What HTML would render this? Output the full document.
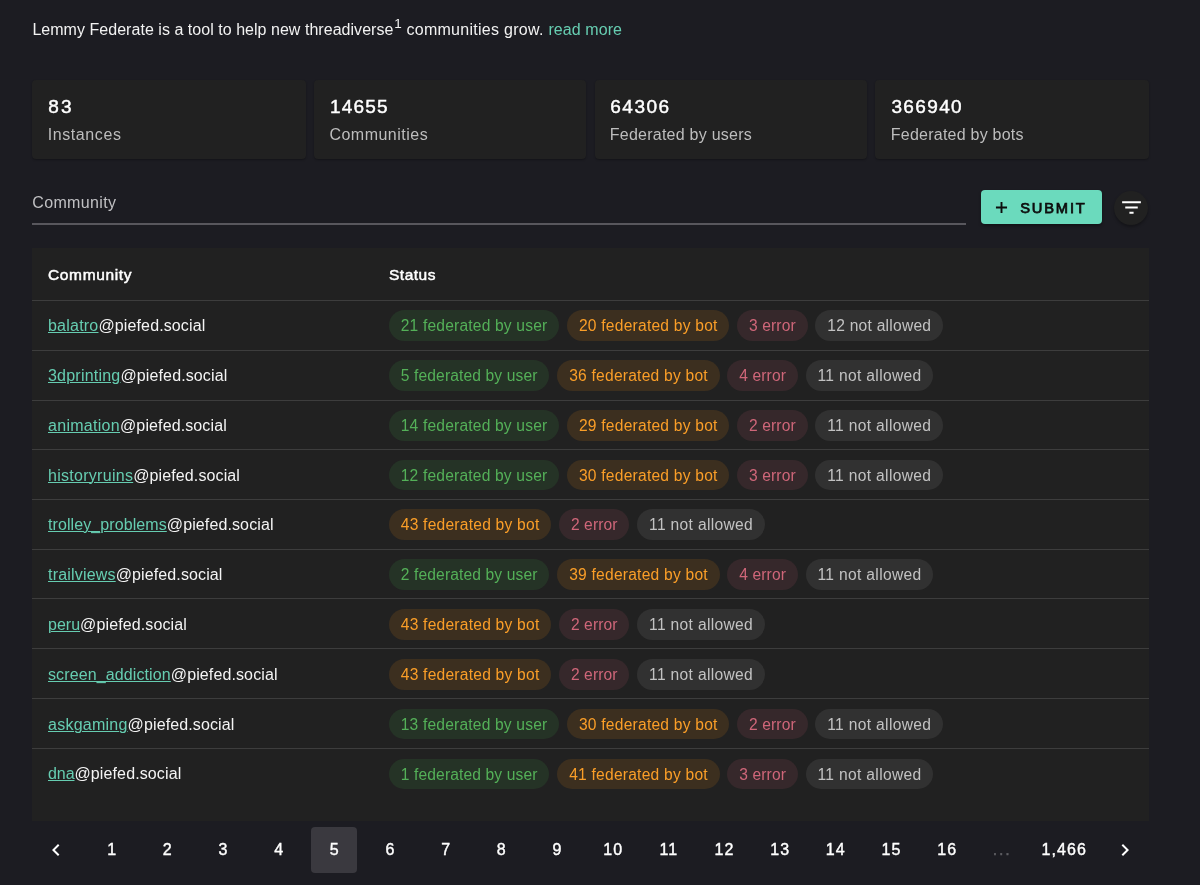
<!DOCTYPE html>
<html lang="en">
<head>
<meta charset="utf-8">
<title>Lemmy Federate</title>
<style>
*{box-sizing:border-box;margin:0;padding:0}
html,body{width:1200px;height:885px;overflow:hidden;background:#1c1c22;color:#fff;font-family:"Liberation Sans",Arial,sans-serif;}
body{position:relative}
.abs{position:absolute}
#root{position:absolute;left:0;top:0;width:1200px;height:885px;will-change:transform;background:#1c1c22}
a{color:#66cdb1;text-decoration:underline;text-decoration-thickness:1px;text-underline-offset:1.2px}
.intro{left:32.4px;top:17.5px;font-size:16px;line-height:24px;white-space:nowrap;color:#f2f2f2;letter-spacing:0}
.intro a{text-decoration:none;color:#66cdb1}
.intro sup{font-size:13.5px;position:relative;top:-7px;vertical-align:baseline;line-height:0;margin:0 0 0 .8px}
.card{top:80px;width:274px;height:79px;background:#212121;border-radius:4px;box-shadow:0 1px 2px rgba(0,0,0,.3)}
.card .n{position:absolute;left:17px;top:14.5px;font-size:19px;-webkit-text-stroke:.45px;line-height:24px;white-space:nowrap}
.card .l{position:absolute;left:16.6px;top:43px;white-space:nowrap;font-size:16px;line-height:24px;color:#bdbdbd;letter-spacing:.2px}
.field-label{left:32.3px;top:191.3px;font-size:16px;line-height:24px;color:#c0c0c3;letter-spacing:.34px}
.field-line{left:32px;top:223px;width:934px;height:1.5px;background:#58575d}
.btn{left:981px;top:190.4px;width:121px;height:34px;border-radius:4px;background:#6bdabd;color:#0d0d0d;box-shadow:0 2px 3px rgba(0,0,0,.35)}
.btn span{position:absolute;left:39.2px;top:.5px;line-height:34.5px;font-size:14.7px;-webkit-text-stroke:.75px}
.fab{left:1114px;top:191px;width:34px;height:34px;border-radius:50%;background:#212121;box-shadow:0 2px 3px rgba(0,0,0,.3)}
.table{left:32px;top:248px;width:1117px;height:572.6px;background:#212121}
.th{position:absolute;top:14.5px;font-size:15.5px;-webkit-text-stroke:.5px;line-height:24px;color:#fff;white-space:nowrap}
.row{position:absolute;left:0;width:100%;height:49.7px}
.ln{position:absolute;left:0;width:100%;height:1px;background:#3d3d3d}
.row .c{position:absolute;left:16px;top:13.8px;line-height:24px;font-size:16px;white-space:nowrap;color:#f4f4f4;letter-spacing:.17px}
.chips{position:absolute;left:356.75px;top:9.85px;height:30.7px;white-space:nowrap;font-size:0}
.chip{display:inline-block;height:30.7px;line-height:31.8px;overflow:hidden;border-radius:15.4px;padding:0 12px;font-size:15.6px;margin-right:7.7px;vertical-align:top}
.g{background:#253326;color:#54b058}
.o{background:#3c2f1f;color:#fa9e28}
.e{background:#36282b;color:#cf6679}
.n2{background:#313131;color:#c2c2c2}
.pg{top:826.6px;width:46px;height:46.2px;border-radius:4px;text-align:center;line-height:46.2px;font-size:16px;-webkit-text-stroke:.4px;letter-spacing:1.1px;text-indent:1.1px;color:#fff}
.pg.sel{background:#3a393f}
</style>
</head>
<body>
<div id="root">
<div class="abs intro"><span style="letter-spacing:.035px">Lemmy Federate is a tool to help new threadiverse</span><sup>1</sup><span style="letter-spacing:.28px"> communities grow. </span><a style="letter-spacing:.08px">read more</a></div>

<div class="abs card" style="left:32px;width:274px"><div class="n" style="left:16.25px;letter-spacing:2.259px">83</div><div class="l" style="left:15.65px;letter-spacing:0.602px">Instances</div></div>
<div class="abs card" style="left:314px;width:272px"><div class="n" style="left:16.00px;letter-spacing:1.214px">14655</div><div class="l" style="left:15.40px;letter-spacing:0.494px">Communities</div></div>
<div class="abs card" style="left:595px;width:272px"><div class="n" style="left:15.35px;letter-spacing:1.464px">64306</div><div class="l" style="left:14.75px;letter-spacing:0.247px">Federated by users</div></div>
<div class="abs card" style="left:875px;width:274px"><div class="n" style="left:16.40px;letter-spacing:1.379px">366940</div><div class="l" style="left:15.80px;letter-spacing:0.233px">Federated by bots</div></div>

<div class="abs field-label">Community</div>
<div class="abs field-line"></div>
<div class="abs btn"><svg class="abs" style="left:11.1px;top:7.8px" width="19" height="19" viewBox="0 0 24 24"><path d="M19,13.2H13.2V19H10.8V13.2H5V10.8H10.8V5H13.2V10.8H19V13.2Z" fill="#0d0d0d"/></svg><span style="letter-spacing:1.820px">SUBMIT</span></div>
<div class="abs fab"><svg class="abs" style="left:4.7px;top:3.9px" width="25" height="25" viewBox="0 0 24 24"><path d="M6,12.9H18V11.1H6M3,6.1V7.9H21V6.1M10,17.9H14V16.1H10V17.9Z" fill="#fff"/></svg></div>

<div class="abs table">
<div class="th" style="left:16px;letter-spacing:0.639px">Community</div>
<div class="th" style="left:357px;letter-spacing:0.509px">Status</div>
<div class="ln" style="top:52.20px"></div>
<div class="ln" style="top:101.91px"></div>
<div class="ln" style="top:151.62px"></div>
<div class="ln" style="top:201.33px"></div>
<div class="ln" style="top:251.04px"></div>
<div class="ln" style="top:300.75px"></div>
<div class="ln" style="top:350.46px"></div>
<div class="ln" style="top:400.17px"></div>
<div class="ln" style="top:449.88px"></div>
<div class="ln" style="top:499.59px"></div>
<div class="row" style="top:52.40px"><div class="c"><a style="letter-spacing:0.225px">balatro</a><span style="letter-spacing:0.116px">@piefed.social</span></div><div class="chips"><span class="chip g" style="letter-spacing:0.182px;padding-right:11.818px">21 federated by user</span><span class="chip o" style="letter-spacing:0.228px;padding-right:11.772px">20 federated by bot</span><span class="chip e" style="letter-spacing:0.094px;padding-right:11.906px">3 error</span><span class="chip n2" style="letter-spacing:0.240px;padding-right:11.760px">12 not allowed</span></div></div>
<div class="row" style="top:102.21px"><div class="c"><a style="letter-spacing:0.222px">3dprinting</a><span style="letter-spacing:0.116px">@piefed.social</span></div><div class="chips"><span class="chip g" style="letter-spacing:0.132px;padding-right:11.868px">5 federated by user</span><span class="chip o" style="letter-spacing:0.228px;padding-right:11.772px">36 federated by bot</span><span class="chip e" style="letter-spacing:0.094px;padding-right:11.906px">4 error</span><span class="chip n2" style="letter-spacing:0.329px;padding-right:11.671px">11 not allowed</span></div></div>
<div class="row" style="top:152.02px"><div class="c"><a style="letter-spacing:0.292px">animation</a><span style="letter-spacing:0.116px">@piefed.social</span></div><div class="chips"><span class="chip g" style="letter-spacing:0.182px;padding-right:11.818px">14 federated by user</span><span class="chip o" style="letter-spacing:0.228px;padding-right:11.772px">29 federated by bot</span><span class="chip e" style="letter-spacing:0.094px;padding-right:11.906px">2 error</span><span class="chip n2" style="letter-spacing:0.329px;padding-right:11.671px">11 not allowed</span></div></div>
<div class="row" style="top:201.83px"><div class="c"><a style="letter-spacing:0.282px">historyruins</a><span style="letter-spacing:0.116px">@piefed.social</span></div><div class="chips"><span class="chip g" style="letter-spacing:0.182px;padding-right:11.818px">12 federated by user</span><span class="chip o" style="letter-spacing:0.228px;padding-right:11.772px">30 federated by bot</span><span class="chip e" style="letter-spacing:0.094px;padding-right:11.906px">3 error</span><span class="chip n2" style="letter-spacing:0.329px;padding-right:11.671px">11 not allowed</span></div></div>
<div class="row" style="top:251.64px"><div class="c"><a style="letter-spacing:0.088px">trolley_problems</a><span style="letter-spacing:0.116px">@piefed.social</span></div><div class="chips"><span class="chip o" style="letter-spacing:0.228px;padding-right:11.772px">43 federated by bot</span><span class="chip e" style="letter-spacing:0.094px;padding-right:11.906px">2 error</span><span class="chip n2" style="letter-spacing:0.329px;padding-right:11.671px">11 not allowed</span></div></div>
<div class="row" style="top:301.45px"><div class="c"><a style="letter-spacing:0.190px">trailviews</a><span style="letter-spacing:0.116px">@piefed.social</span></div><div class="chips"><span class="chip g" style="letter-spacing:0.132px;padding-right:11.868px">2 federated by user</span><span class="chip o" style="letter-spacing:0.228px;padding-right:11.772px">39 federated by bot</span><span class="chip e" style="letter-spacing:0.094px;padding-right:11.906px">4 error</span><span class="chip n2" style="letter-spacing:0.329px;padding-right:11.671px">11 not allowed</span></div></div>
<div class="row" style="top:351.26px"><div class="c"><a style="letter-spacing:0.017px">peru</a><span style="letter-spacing:0.116px">@piefed.social</span></div><div class="chips"><span class="chip o" style="letter-spacing:0.228px;padding-right:11.772px">43 federated by bot</span><span class="chip e" style="letter-spacing:0.094px;padding-right:11.906px">2 error</span><span class="chip n2" style="letter-spacing:0.329px;padding-right:11.671px">11 not allowed</span></div></div>
<div class="row" style="top:401.07px"><div class="c"><a style="letter-spacing:0.114px">screen_addiction</a><span style="letter-spacing:0.116px">@piefed.social</span></div><div class="chips"><span class="chip o" style="letter-spacing:0.228px;padding-right:11.772px">43 federated by bot</span><span class="chip e" style="letter-spacing:0.094px;padding-right:11.906px">2 error</span><span class="chip n2" style="letter-spacing:0.329px;padding-right:11.671px">11 not allowed</span></div></div>
<div class="row" style="top:450.88px"><div class="c"><a style="letter-spacing:0.247px">askgaming</a><span style="letter-spacing:0.116px">@piefed.social</span></div><div class="chips"><span class="chip g" style="letter-spacing:0.182px;padding-right:11.818px">13 federated by user</span><span class="chip o" style="letter-spacing:0.228px;padding-right:11.772px">30 federated by bot</span><span class="chip e" style="letter-spacing:0.094px;padding-right:11.906px">2 error</span><span class="chip n2" style="letter-spacing:0.329px;padding-right:11.671px">11 not allowed</span></div></div>
<div class="row" style="top:500.69px"><div class="c"><a style="letter-spacing:-0.068px">dna</a><span style="letter-spacing:0.116px">@piefed.social</span></div><div class="chips"><span class="chip g" style="letter-spacing:0.132px;padding-right:11.868px">1 federated by user</span><span class="chip o" style="letter-spacing:0.228px;padding-right:11.772px">41 federated by bot</span><span class="chip e" style="letter-spacing:0.094px;padding-right:11.906px">3 error</span><span class="chip n2" style="letter-spacing:0.329px;padding-right:11.671px">11 not allowed</span></div></div>
</div>

<div id="pager">
<div class="abs pg" style="left:33.0px;width:46px"><svg style="position:absolute;left:11.1px;top:11.1px" width="24" height="24" viewBox="0 0 24 24"><path d="M15.41,16.58L10.83,12L15.41,7.41L14,6L8,12L14,18L15.41,16.58Z" fill="#fff"/></svg></div>
<div class="abs pg" style="left:88.7px;width:46px">1</div>
<div class="abs pg" style="left:144.3px;width:46px">2</div>
<div class="abs pg" style="left:200.0px;width:46px">3</div>
<div class="abs pg" style="left:255.6px;width:46px">4</div>
<div class="abs pg sel" style="left:311.3px;width:46px">5</div>
<div class="abs pg" style="left:367.0px;width:46px">6</div>
<div class="abs pg" style="left:422.6px;width:46px">7</div>
<div class="abs pg" style="left:478.3px;width:46px">8</div>
<div class="abs pg" style="left:533.9px;width:46px">9</div>
<div class="abs pg" style="left:589.6px;width:46px">10</div>
<div class="abs pg" style="left:645.3px;width:46px">11</div>
<div class="abs pg" style="left:700.9px;width:46px">12</div>
<div class="abs pg" style="left:756.6px;width:46px">13</div>
<div class="abs pg" style="left:812.2px;width:46px">14</div>
<div class="abs pg" style="left:867.9px;width:46px">15</div>
<div class="abs pg" style="left:923.6px;width:46px">16</div>
<div class="abs pg" style="left:978.3px;width:46px;color:#5f5f64;letter-spacing:1.8px;text-indent:1.8px">...</div>
<div class="abs pg" style="left:1030.8px;width:66px">1,466</div>
<div class="abs pg" style="left:1102.0px;width:46px"><svg style="position:absolute;left:11.1px;top:11.1px" width="24" height="24" viewBox="0 0 24 24"><path d="M8.59,16.58L13.17,12L8.59,7.41L10,6L16,12L10,18L8.59,16.58Z" fill="#fff"/></svg></div>
</div>
</div>
</body>
</html>
